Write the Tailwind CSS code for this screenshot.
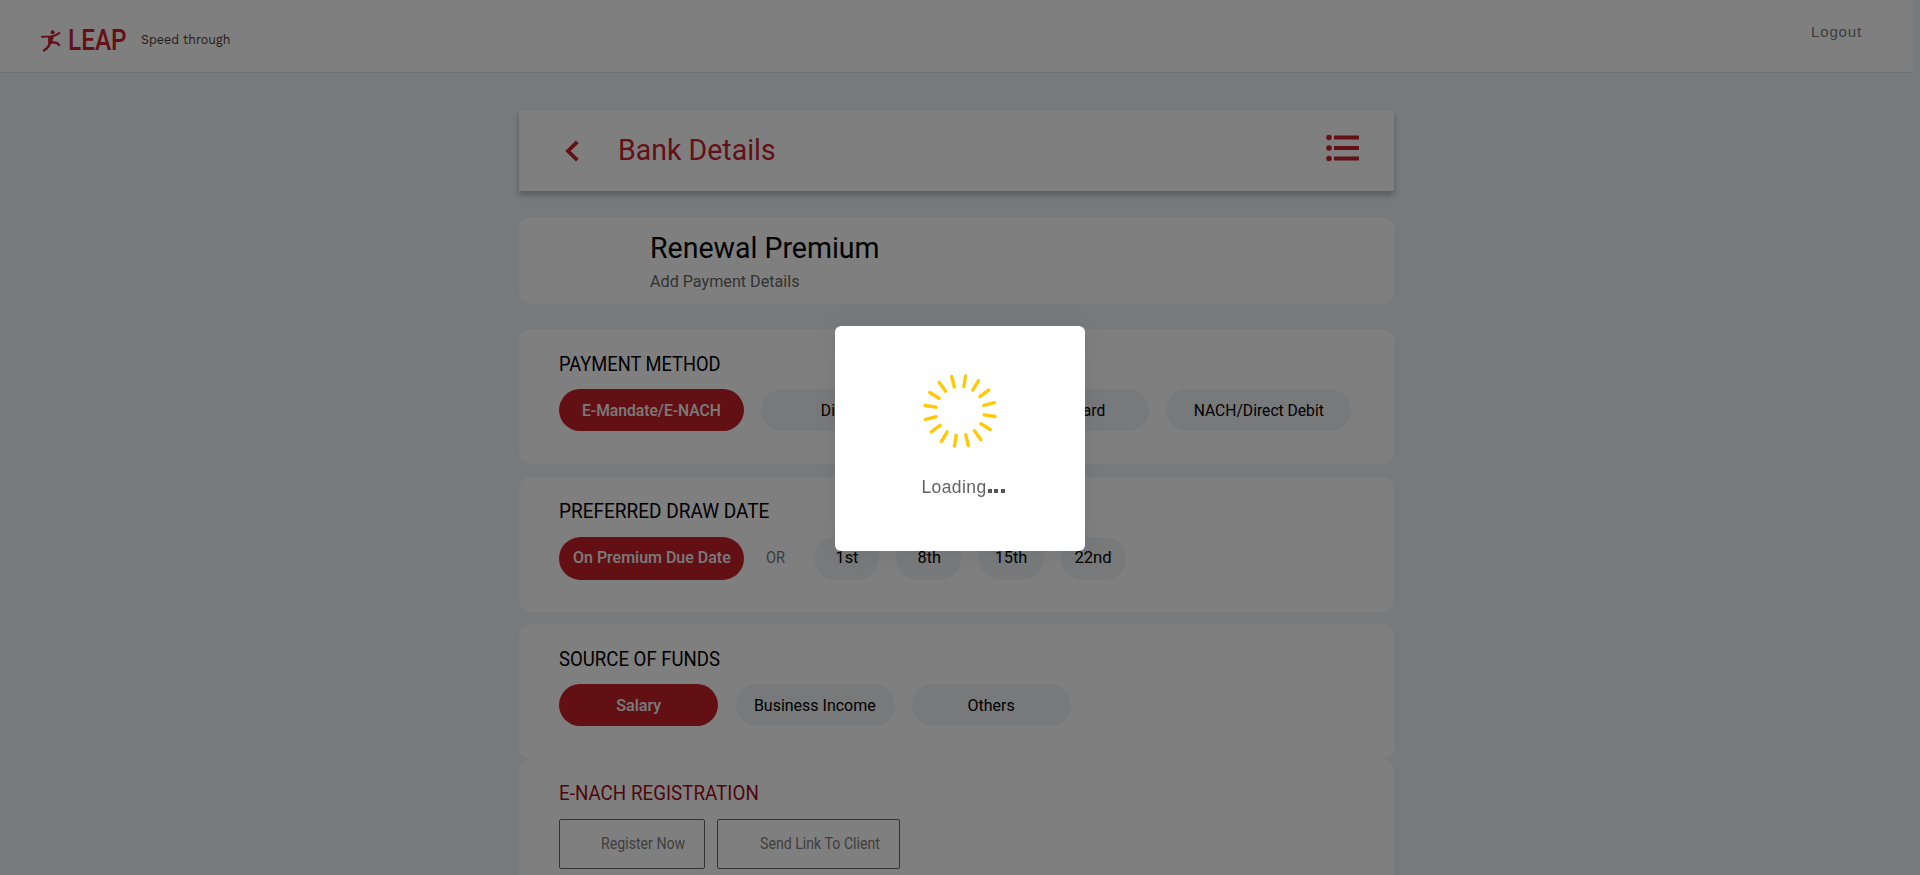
<!DOCTYPE html>
<html lang="en">
<head>
<meta charset="utf-8">
<title>LEAP - Bank Details</title>
<script src="https://cdn.jsdelivr.net/npm/@tailwindcss/browser@4"></script>
</head>
<body class="h-[875px] overflow-hidden bg-[#eff2f5] font-['Roboto',sans-serif] text-black">
  <header class="flex h-[73px] w-[1913px] justify-between border-b border-[#dcdfe2] bg-white">
    <div class="flex items-center pt-2 pl-[41px]">
      <svg class="mt-px h-[22px] w-[20px]" viewBox="0 0 20 22" fill="none" stroke="#c8202f" stroke-linecap="round" stroke-linejoin="round">
        <circle cx="11.6" cy="2.2" r="2" fill="#c8202f" stroke="none"/>
        <path d="M1 6.8 10.5 6.4Q15 6 18.2 3" stroke-width="2"/>
        <path d="M10.2 7.5 9 13.2Q7.500 18 3 20.4" stroke-width="2.4"/>
        <path d="M9.5 12.8Q15.5 11.5 18.2 15.2" stroke-width="2.2"/>
        <path d="M8 6.5 12.5 6 10.3 13.5 8 13.5Z" fill="#c8202f" stroke-width="1"/>
      </svg>
      <div class="ml-[7px] w-[73px]"><span class="inline-block origin-left scale-x-[.84] text-[29px] leading-8 font-medium text-[#c8202f]">LEAP</span></div>
      <span class="origin-left scale-x-[.96] font-['Work_Sans',Roboto,sans-serif] text-[13px] leading-5 text-[#54383a]">Speed through</span>
    </div>
    <a class="mr-[51px] pt-[22px] font-['Liberation_Sans',sans-serif] text-[15px] leading-5 tracking-[0.85px] text-[#7a7a7a]">Logout</a>
  </header>

  <main class="ml-[519px] flex w-[875px] flex-col">
    <section class="mt-[37px] flex h-[81px] items-center bg-white shadow-[0_4px_6px_rgba(0,0,0,0.25)]">
      <svg class="ml-[46px] h-[22px] w-[14px]" viewBox="0 0 14 22" fill="none" stroke="#c8202f" stroke-width="3.800"><path d="M12.3 1.8 3 11l9.3 9.2"/></svg>
      <h1 class="ml-[39px] origin-left scale-x-[.95] pb-[2px] text-[30px] leading-9 text-[#c8202f]">Bank Details</h1>
      <svg class="mr-[34px] mb-[5px] ml-auto h-7 w-[34px]" viewBox="0 0 34 28" fill="#c8202f">
        <circle cx="3" cy="3.5" r="2.8"/><circle cx="3" cy="14" r="2.8"/><circle cx="3" cy="24.5" r="2.8"/>
        <path d="M8 1.5h25v4H8zM8 12h25v4H8zM8 22.500h25v4H8z"/>
      </svg>
    </section>

    <section class="mt-[26px] h-[87px] rounded-xl bg-white pt-[13px] pl-[131px]">
      <h2 class="w-max origin-left scale-x-[.95] text-[30px] leading-9">Renewal Premium</h2>
      <p class="mt-[5px] w-max origin-left scale-x-[.95] text-[17px] leading-5 text-[#666]">Add Payment Details</p>
    </section>

    <section class="mt-[25.300px] h-[135px] rounded-xl bg-white pt-[22.500px] pl-10">
      <h3 class="w-max origin-left scale-x-[.87] text-[21px] leading-6">PAYMENT METHOD</h3>
      <div class="mt-[13.500px] flex gap-[17.3px] text-[17px]">
        <span class="flex h-[42px] w-[185px] items-center justify-center rounded-full bg-[#c6212b] text-[#f5f5f5]"><span class="scale-x-[.92] font-medium">E-Mandate/E-NACH</span></span>
        <span class="flex h-[42px] w-[185px] items-center justify-center rounded-full bg-[#eff2f5]"><span class="scale-x-[.92]">Direct Bill</span></span>
        <span class="flex h-[42px] w-[185px] items-center justify-center rounded-full bg-[#eff2f5] pl-5"><span class="scale-x-[.92]">Credit Card</span></span>
        <span class="flex h-[42px] w-[185px] items-center justify-center rounded-full bg-[#eff2f5]"><span class="scale-x-[.92]">NACH/Direct Debit</span></span>
      </div>
    </section>

    <section class="mt-[12.300px] h-[135px] rounded-xl bg-white pt-[22.500px] pl-10">
      <h3 class="w-max origin-left scale-x-[.905] text-[21px] leading-6">PREFERRED DRAW DATE</h3>
      <div class="mt-[13.500px] flex items-center text-[17px]">
        <span class="flex h-[43px] w-[185px] items-center justify-center rounded-full bg-[#c6212b] text-[#f5f5f5]"><span class="scale-x-[.94] font-medium">On Premium Due Date</span></span>
        <span class="w-[70px] pl-[22px] text-[#777]"><span class="inline-block origin-left scale-x-[.86]">OR</span></span>
        <div class="flex gap-[17.3px]">
          <span class="flex h-[43px] w-[65px] items-center justify-center rounded-full bg-[#eff2f5]"><span class="scale-x-[.96]">1st</span></span>
          <span class="flex h-[43px] w-[65px] items-center justify-center rounded-full bg-[#eff2f5]"><span class="scale-x-[.96]">8th</span></span>
          <span class="flex h-[43px] w-[65px] items-center justify-center rounded-full bg-[#eff2f5]"><span class="scale-x-[.96]">15th</span></span>
          <span class="flex h-[43px] w-[65px] items-center justify-center rounded-full bg-[#eff2f5]"><span class="scale-x-[.98]">22nd</span></span>
        </div>
      </div>
    </section>

    <section class="mt-[12.800px] h-[135px] rounded-xl bg-white pt-[22.500px] pl-10">
      <h3 class="w-max origin-left scale-x-[.885] text-[21px] leading-6">SOURCE OF FUNDS</h3>
      <div class="mt-[13.500px] flex gap-[17.5px] text-[17px]">
        <span class="flex h-[42px] w-[159px] items-center justify-center rounded-full bg-[#c6212b] text-[#f5f5f5]"><span class="scale-x-[.95] font-medium">Salary</span></span>
        <span class="flex h-[42px] w-[159px] items-center justify-center rounded-full bg-[#eff2f5]"><span class="scale-x-[.94]">Business Income</span></span>
        <span class="flex h-[42px] w-[159px] items-center justify-center rounded-full bg-[#eff2f5]"><span class="scale-x-[.94]">Others</span></span>
      </div>
    </section>

    <section class="h-[135px] rounded-xl bg-white pt-[22px] pl-10">
      <h3 class="w-max origin-left scale-x-[.895] text-[21px] leading-6 text-[#9c0f17]">E-NACH REGISTRATION</h3>
      <div class="mt-[14px] flex gap-3 text-[16px] leading-5 text-[#7d7d7d]">
        <span class="flex h-[50px] w-[146px] items-center rounded-[2px] border border-[#666] pl-[41px]"><span class="origin-left scale-x-[.885] whitespace-nowrap">Register Now</span></span>
        <span class="flex h-[50px] w-[183px] items-center rounded-[2px] border border-[#666] pl-[42px]"><span class="origin-left scale-x-[.885] whitespace-nowrap">Send Link To Client</span></span>
      </div>
    </section>
  </main>

  <div class="fixed inset-0 flex items-center justify-center bg-black/50 pt-px">
    <div class="flex h-[225px] w-[250px] flex-col items-center rounded-md bg-white shadow-[0_0_30px_rgba(0,0,0,0.08)]">
      <svg id="spinner" class="mt-[46.500px] h-[78px] w-[78px]" viewBox="-39 -39 78 78" stroke="#ffc907" stroke-width="3.4" stroke-linecap="round"></svg>
      <div class="mt-[25px] flex items-baseline pl-[6px] text-[#626262]">
        <span class="font-['Liberation_Sans',sans-serif] text-[17.5px] leading-6 tracking-[0.4px]">Loading</span><span class="flex gap-[2.5px] pl-px"><i class="size-1 bg-[#555]"></i><i class="size-1 bg-[#555]"></i><i class="size-1 bg-[#555]"></i></span>
      </div>
    </div>
  </div>
  <script>
    const spinner = document.getElementById('spinner');
    for (let i = 0; i < 16; i++) {
      const tick = document.createElementNS('http://www.w3.org/2000/svg', 'path');
      tick.setAttribute('d', 'M0-24.500V-35.500');
      tick.setAttribute('transform', `rotate(${9 + i * 22.5})`);
      spinner.appendChild(tick);
    }
  </script>
</body>
</html>
